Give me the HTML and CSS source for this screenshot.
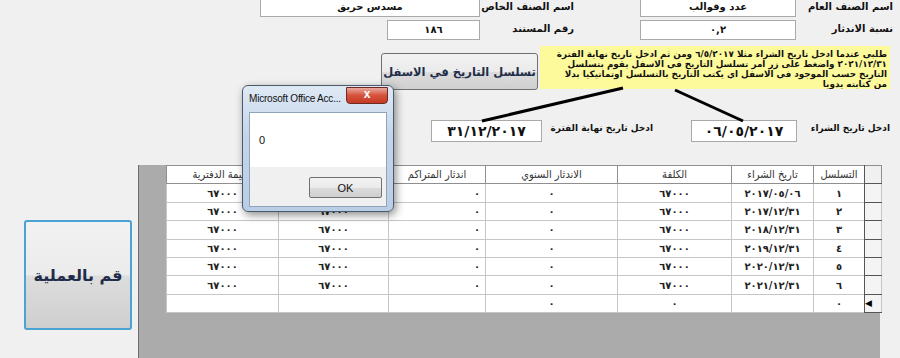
FILE: index.html
```html
<!doctype html>
<html lang="ar">
<head>
  <meta charset="utf-8">
  <title>حساب الاندثار</title>
  <link rel="stylesheet" href="styles.css">
</head>
<body>
<div class="form">
  <div class="row row-1">
    <div class="box box-name">مسدس حريق</div>
    <div class="lbl lbl-a">اسم الصنف الخاص</div>
    <div class="box box-gen">عدد وقوالب</div>
    <div class="lbl lbl-b">اسم الصنف العام</div>
  </div>
  <div class="row row-2">
    <div class="box box-doc">١٨٦</div>
    <div class="lbl lbl-a">رقم المستند</div>
    <div class="box box-gen">٠,٢</div>
    <div class="lbl lbl-b">نسبة الاندثار</div>
  </div>
  <div class="row row-3">
    <button class="btn btn-seq">تسلسل التاريخ في الاسفل</button>
    <div class="note">
      <p>طلبي عندما ادخل تاريخ الشراء مثلا ٦/٥/٢٠١٧ ومن ثم ادخل تاريخ نهاية الفترة</p>
      <p>٢٠٢١/١٢/٣١ واضغط على زر امر تسلسل التاريخ في الاسفل يقوم بتسلسل</p>
      <p>التاريخ حسب الموجود في الاسفل  اي يكتب التاريخ بالتسلسل اوتماتيكيا بدلا</p>
      <p>من كتابته يدويا</p>
    </div>
  </div>
  <div class="row row-4">
    <div class="box date date-end">٣١/١٢/٢٠١٧</div>
    <div class="lbl lbl-end">ادخل تاريخ نهاية الفترة</div>
    <div class="box date date-buy">٠٦/٠٥/٢٠١٧</div>
    <div class="lbl lbl-buy">ادخل تاريخ الشراء</div>
  </div>
  <div class="bottom">
    <div class="side"><button class="btn btn-run">قم بالعملية</button></div>
    <div class="sheet">
      <table class="grid">
        <colgroup>
          <col class="c-sel"><col class="c-seq"><col class="c-date"><col class="c-cost">
          <col class="c-year"><col class="c-acc"><col class="c-acc2"><col class="c-book">
        </colgroup>
        <thead>
          <tr>
            <th class="sel"></th><th>التسلسل</th><th>تاريخ الشراء</th><th>الكلفة</th>
            <th>الاندثار السنوي</th><th>اندثار المتراكم</th><th>المتراكم</th><th>القيمة الدفترية</th>
          </tr>
        </thead>
        <tbody>
          <tr><td class="sel"></td><td>١</td><td>٢٠١٧/٠٥/٠٦</td><td>٦٧٠٠٠</td><td>٠</td><td class="r">٠</td><td>٦٧٠٠٠</td><td>٦٧٠٠٠</td></tr>
          <tr><td class="sel"></td><td>٢</td><td>٢٠١٧/١٢/٣١</td><td>٦٧٠٠٠</td><td>٠</td><td class="r">٠</td><td>٦٧٠٠٠</td><td>٦٧٠٠٠</td></tr>
          <tr><td class="sel"></td><td>٣</td><td>٢٠١٨/١٢/٣١</td><td>٦٧٠٠٠</td><td>٠</td><td class="r">٠</td><td>٦٧٠٠٠</td><td>٦٧٠٠٠</td></tr>
          <tr><td class="sel"></td><td>٤</td><td>٢٠١٩/١٢/٣١</td><td>٦٧٠٠٠</td><td>٠</td><td class="r">٠</td><td>٦٧٠٠٠</td><td>٦٧٠٠٠</td></tr>
          <tr><td class="sel"></td><td>٥</td><td>٢٠٢٠/١٢/٣١</td><td>٦٧٠٠٠</td><td>٠</td><td class="r">٠</td><td>٦٧٠٠٠</td><td>٦٧٠٠٠</td></tr>
          <tr><td class="sel"></td><td>٦</td><td>٢٠٢١/١٢/٣١</td><td>٦٧٠٠٠</td><td>٠</td><td class="r">٠</td><td>٦٧٠٠٠</td><td>٦٧٠٠٠</td></tr>
          <tr class="new"><td class="sel cur">&#9664;</td><td>٠</td><td></td><td>٠</td><td>٠</td><td></td><td></td><td></td></tr>
        </tbody>
      </table>
    </div>
  </div>

  <svg class="arrows" width="900" height="358">
    <line x1="623" y1="88" x2="482" y2="121"></line>
    <line x1="675" y1="90" x2="743" y2="121"></line>
  </svg>

  <div class="msgbox">
    <div class="msg-title">
      <span class="msg-cap">Microsoft Office Acc...</span>
      <span class="msg-close">x</span>
    </div>
    <div class="msg-body">
      <div class="msg-text">0</div>
      <div class="msg-foot"><button class="msg-ok">OK</button></div>
    </div>
  </div>
</div>
</body>
</html>
```

FILE: styles.css
```css
html,body{
	margin:0; padding:0;
	background:#f0f0f0;
	font-family:"DejaVu Sans",sans-serif;
}
.form{
	position:relative;
	width:900px; height:358px;
	overflow:hidden;
	background:#f0f0f0;
}
.row{ display:flex; align-items:flex-start; }
.row-1{ margin-top:-3px; height:20px; }
.row-2{ margin-top:3px; height:20px; }
.row-3{ margin-top:6px; height:44px; }
.row-4{ margin-top:30px; height:22px; }

.box{
	box-sizing:border-box;
	height:20px;
	background:#fff;
	border:1px solid #a9a9a9;
	direction:rtl; text-align:center;
	font-size:10px; font-weight:bold; line-height:18px;
	color:#111; white-space:nowrap;
}
.lbl{
	direction:rtl; text-align:right;
	font-size:10px; font-weight:bold; line-height:18px;
	color:#111; white-space:nowrap;
}
.box-name{ margin-left:260px; width:220px; }
.box-doc{ margin-left:387px; width:93px; }
.lbl-a{ margin-left:10px; width:84px; }
.box-gen{ margin-left:66px; width:156px; }
.lbl-b{ margin-left:10px; width:87px; }
.row-1 .lbl{ line-height:20px; }

.btn{
	box-sizing:border-box;
	border:1px solid #707070; border-radius:3px;
	background:linear-gradient(#f2f2f2 0%,#ebebeb 50%,#dddddd 51%,#cfcfcf 100%);
	font-family:"DejaVu Sans",sans-serif; font-weight:bold;
	color:#1f2d4a; direction:rtl; padding:0; white-space:nowrap;
}
.btn-seq{ margin-left:381px; margin-top:7px; width:157px; height:37px; font-size:11.5px; }
.note{
	box-sizing:border-box;
	margin-left:2px; width:350px; height:43px;
	background:#fdfa9c;
	direction:rtl; text-align:right;
	padding:3px 3px 0 4px;
	font-size:8.8px; font-weight:bold; line-height:10px; color:#111;
	white-space:nowrap; overflow:hidden;
}
.note p{ margin:0; }

.date{ height:22px; font-size:14px; line-height:20px; }
.date-end{ margin-left:431px; width:111px; }
.lbl-end{ margin-left:15px; width:96px; }
.date-buy{ margin-left:38px; width:106px; }
.lbl-buy{ margin-left:13px; width:80px; }
.lbl-end,.lbl-buy{ line-height:16px; font-size:9px; }

.bottom{ display:flex; margin-top:23px; height:193px; }
.side{ width:138px; }
.btn-run{ margin-left:24px; margin-top:55px; width:108px; height:110px; font-size:16px;
	border:2px solid #4aa3d3; border-radius:3px; }
.sheet{
	box-sizing:border-box;
	width:742px; height:193px;
	background:#ababab;
	border-left:1px solid #6d6d6d;
	padding-left:27px;
}
.grid{
	direction:rtl;
	width:715px;
	border-collapse:collapse;
	table-layout:fixed;
	background:#fff;
	font-size:10px;
}
.c-sel{ width:17px; } .c-seq{ width:51px; } .c-date{ width:82px; } .c-cost{ width:114px; }
.c-year{ width:132px; } .c-acc{ width:97px; } .c-acc2{ width:110px; } .c-book{ width:112px; }
.grid th,.grid td{
	border:1px solid #c6c6c6;
	padding:0; height:17.4px;
	text-align:center; white-space:nowrap; overflow:hidden;
}
.grid th{
	font-weight:normal; font-size:11px; color:#333;
	border-color:#8f8f8f;
	font-family:"DejaVu Sans Condensed","DejaVu Sans",sans-serif;
}
.grid td{ font-weight:bold; color:#222; }
.grid td.r{ text-align:right; padding-right:5px; }
.grid .sel{ background:#f4f4f4; border-left-color:#555; border-bottom-color:#555; }
.grid th.sel{ background:#f0f0f0; }
.grid td.cur{ font-size:9px; color:#000; text-align:left; }

.arrows{ position:absolute; left:0; top:0; pointer-events:none; }
.arrows line{ stroke:#000; stroke-width:3; }

.msgbox{
	position:absolute; left:242px; top:85px;
	box-sizing:border-box;
	width:152px; height:127px;
	border:1px solid #4b5a6b; border-radius:6px;
	background:linear-gradient(#dfe9f5,#c4d5ea 40%,#b9cde5);
	box-shadow:2px 3px 8px rgba(0,0,0,.45);
	font-family:"Liberation Sans",Arial,sans-serif;
}
.msg-title{ position:relative; height:26px; }
.msg-cap{ position:absolute; left:6px; top:7px; font-size:10px; letter-spacing:-0.2px; color:#111; white-space:nowrap; }
.msg-close{
	position:absolute; right:5px; top:1px;
	width:40px; height:15px;
	border:1px solid #6b2a22; border-radius:0 0 4px 4px;
	background:linear-gradient(#e9a99c,#d6523d 50%,#c43a22);
	color:#fff; font-weight:bold; font-size:12px; line-height:13px; text-align:center;
}
.msg-body{
	margin:0 6px; height:93px;
	border:1px solid #8fa3bb;
	background:#f0f0f0;
}
.msg-text{ height:54px; background:#fff; padding:21px 0 0 9px; box-sizing:border-box; font-size:11px; color:#111; }
.msg-foot{ display:flex; justify-content:flex-end; padding:10px 4px 0 0; }
.msg-ok{
	width:73px; height:21px;
	border:1px solid #707070; border-radius:2px;
	background:linear-gradient(#f2f2f2,#ebebeb 50%,#dcdcdc 51%,#cfcfcf);
	font-family:"Liberation Sans",Arial,sans-serif; font-size:11px; color:#111;
}
```
